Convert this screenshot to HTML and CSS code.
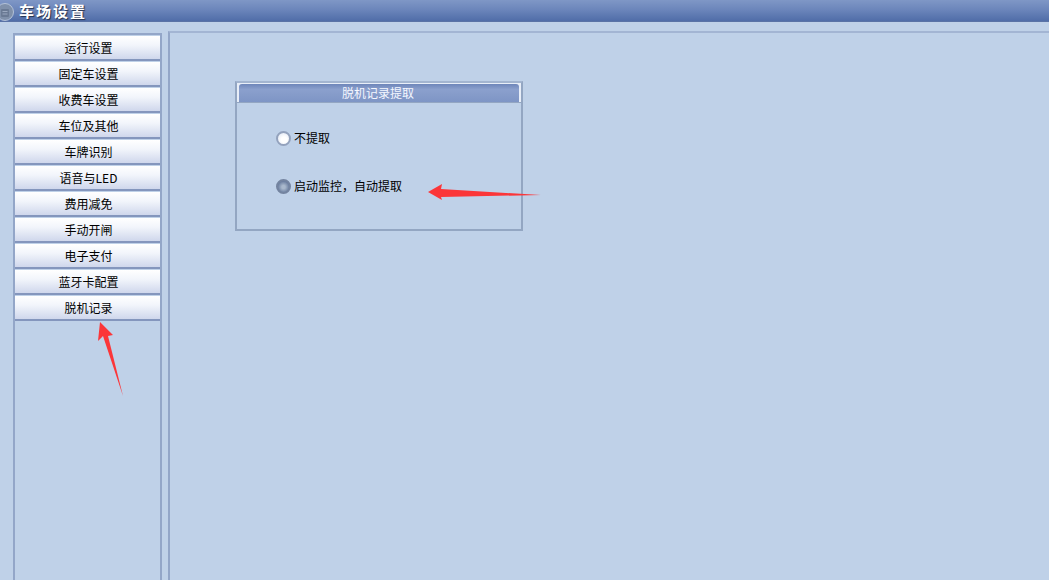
FILE: index.html
```html
<!DOCTYPE HTML>
<html lang="zh-CN">
<head>
  <meta name="viewport" content="width=device-width, initial-scale=1">
  <title>车场设置</title>
  <link rel="stylesheet" href="styles.css">
</head>
<body>
  <div class="title-bar">
    <svg class="title-icon" width="16" height="22" viewBox="0 0 16 22">
      <circle cx="5" cy="12" r="8.5" fill="#7f90aa" stroke="#b4c2d8" stroke-width="1"/>
      <rect x="1" y="9" width="8" height="8" rx="1" fill="#6a7a94"/>
      <rect x="2.5" y="11" width="5" height="1" fill="#9aa8bf"/>
      <rect x="2.5" y="13.5" width="5" height="1" fill="#9aa8bf"/>
    </svg>
    <span class="title-text">车场设置</span>
  </div>

  <div class="content">
    <div class="side-menu">
      <button class="menu-btn">运行设置</button>
      <button class="menu-btn">固定车设置</button>
      <button class="menu-btn">收费车设置</button>
      <button class="menu-btn">车位及其他</button>
      <button class="menu-btn">车牌识别</button>
      <button class="menu-btn">语音与LED</button>
      <button class="menu-btn">费用减免</button>
      <button class="menu-btn">手动开闸</button>
      <button class="menu-btn">电子支付</button>
      <button class="menu-btn">蓝牙卡配置</button>
      <button class="menu-btn">脱机记录</button>
    </div>

    <div class="main-panel">
      <div class="group-box">
        <div class="group-head"><div class="group-title">脱机记录提取</div></div>
        <div class="group-body">
          <div class="radio-row"><span class="radio"></span>不提取</div>
          <div class="radio-row"><span class="radio checked"></span>启动监控，自动提取</div>
        </div>
      </div>
    </div>
  </div>

  <!-- red annotation arrows -->
  <svg class="arrows" width="1049" height="580" viewBox="0 0 1049 580">
    <polygon points="428,192 442,184 441,189 541,195 441,197 442,200" fill="#fb3639"/>
    <polygon points="100,322 113,335 108,336 123,396 103,336 98,341" fill="#fb3639"/>
  </svg>
</body>
</html>
```

FILE: styles.css
```css
/* Global Styles */
:root {
  --bg-color: #bfd1e8;
  --border-color: #93a6c8;
  --group-border: #93a6c2;
}

html, body {
  height: 100%;
}

body {
  margin: 0;
  background-color: var(--bg-color);
  color: #000;
  font-family: "Noto Sans CJK SC", "Liberation Sans", sans-serif;
  font-size: 12px;
  overflow: hidden;
  display: flex;
  flex-direction: column;
}

/* Title Bar */
.title-bar {
  height: 22px;
  flex: none;
  display: flex;
  align-items: center;
  overflow: hidden;
  background: linear-gradient(to bottom, #7f97c6 0%, #6c86bb 45%, #506da8 100%);
  border-bottom: 1px solid #5a73a6;
  box-sizing: border-box;
}

.title-icon {
  flex: none;
}

.title-text {
  margin-left: 3px;
  color: #fff;
  font-size: 15px;
  font-weight: bold;
  letter-spacing: 2px;
  text-shadow: 1px 1px 1px #23304d;
}

/* Layout */
.content {
  flex: 1;
  display: flex;
  padding: 9px 0 0 13px;
  min-height: 0;
}

.side-menu {
  width: 149px;
  box-sizing: border-box;
  flex: none;
  margin-top: 2px;
  border-left: 2px solid var(--border-color);
  border-right: 2px solid var(--border-color);
  border-top: 2px solid var(--border-color);
  display: flex;
  flex-direction: column;
  gap: 1px;
  padding-top: 1px;
}

.menu-btn {
  height: 25px;
  flex: none;
  padding: 0 0 0 2px;
  border: none;
  border-bottom: 2px solid #8496bd;
  background: linear-gradient(to bottom, #ffffff 0%, #f2f5fb 40%, #cfd7ec 100%);
  color: #000;
  font-family: inherit;
  font-size: 12px;
  line-height: 23px;
  text-align: center;
}

.main-panel {
  flex: 1;
  margin-left: 6px;
  border-left: 2px solid var(--border-color);
  border-top: 2px solid #a3b5d3;
  padding: 48px 0 0 65px;
}

/* Group Box */
.group-box {
  width: 288px;
  height: 150px;
  box-sizing: border-box;
  border: 2px solid var(--group-border);
  border-top-color: #a3b5d0;
}

.group-head {
  height: 20px;
  box-sizing: border-box;
  padding: 1px 1px 0;
  background-color: #e8eef8;
  border-bottom: 1px solid #93a6c2;
}

.group-title {
  height: 18px;
  margin: 0 1px;
  padding-right: 2px;
  border-radius: 3px 3px 0 0;
  background: linear-gradient(to bottom, #6e86ba 0%, #8ba0cd 30%, #7e95c5 100%);
  color: #f4f7ff;
  text-align: center;
  line-height: 18px;
}

.group-body {
  padding: 26px 0 0 39px;
  display: flex;
  flex-direction: column;
  gap: 30px;
}

.radio-row {
  height: 18px;
  display: flex;
  align-items: center;
  line-height: 18px;
}

.radio {
  width: 15px;
  height: 15px;
  margin-right: 3px;
  box-sizing: border-box;
  border-radius: 50%;
  border: 2px solid #93a2bd;
  background: radial-gradient(circle at 55% 60%, #ffffff 30%, #dde5f3 100%);
}

.radio.checked {
  border-color: #7484a0;
  background: radial-gradient(circle at 50% 55%, #a9b8cc 20%, #6c7fa0 70%);
}

/* Overlay */
.arrows {
  position: absolute;
  left: 0;
  top: 0;
  pointer-events: none;
}
```
